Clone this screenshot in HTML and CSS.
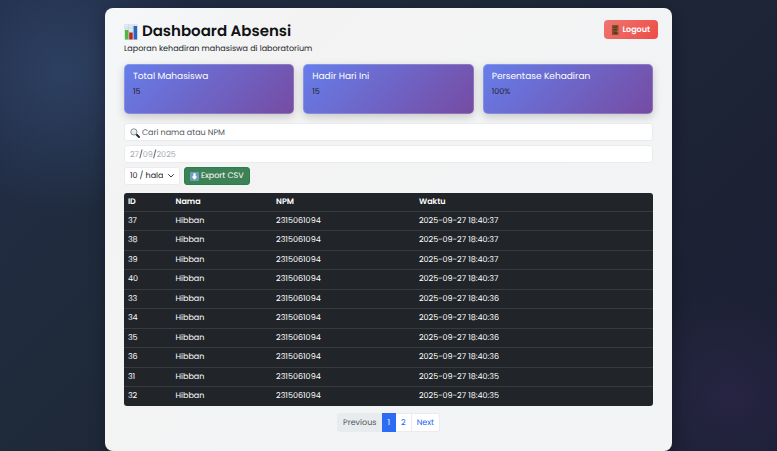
FILE: index.html
```html
<!DOCTYPE html>
<html lang="id">
<head>
<meta charset="utf-8">
<meta name="viewport" content="width=device-width, initial-scale=1">
<title>Dashboard Absensi</title>
<link rel="stylesheet" href="styles.css">
</head>
<body>
<main class="panel">
  <header class="header">
    <div class="heading">
      <h1 class="title">
        <svg class="title-icon" viewBox="0 0 14 16" aria-hidden="true">
          <rect width="14" height="16" fill="#dce9f1"/>
          <path d="M0 4h14M0 8h14M0 12h14M4.500 0v16M9 0v16" stroke="#bfd3df" stroke-width=".5"/>
          <rect x="1" y="6" width="3.500" height="9.500" fill="#4fb83d"/>
          <rect x="5.200" y="8.500" width="3.500" height="7" fill="#c5221f"/>
          <rect x="9.600" y="2" width="3.500" height="13.500" fill="#2b66bd"/>
        </svg>
        Dashboard Absensi
      </h1>
      <p class="subtitle">Laporan kehadiran mahasiswa di laboratorium</p>
    </div>
    <button class="logout" type="button">
      <svg class="door-icon" viewBox="0 0 7 10" aria-hidden="true">
        <rect width="6.500" height="10" fill="#80502f"/>
        <path d="M1.500 1.500h3.500v1.500H1.500zM1.500 4h3.500v1.500H1.500zM1.500 7h3.500v2H1.500z" fill="#633b23"/>
        <circle cx="5.700" cy="6" r=".6" fill="#d0a060"/>
      </svg>
      Logout
    </button>
  </header>

  <section class="stats">
    <article class="stat"><h2>Total Mahasiswa</h2><p>15</p></article>
    <article class="stat"><h2>Hadir Hari Ini</h2><p>15</p></article>
    <article class="stat"><h2>Persentase Kehadiran</h2><p>100%</p></article>
  </section>

  <form class="filters">
    <label class="field">
      <svg class="search-icon" viewBox="0 0 10 10" aria-hidden="true">
        <path d="M6 6l3 3" stroke="#25282b" stroke-width="1.900" stroke-linecap="round"/>
        <circle cx="3.900" cy="3.900" r="3.100" fill="#e3edf2" stroke="#81878b" stroke-width=".9"/>
        <path d="M2.200 3.500q.4-1.300 1.700-1.400" fill="none" stroke="#fff" stroke-width=".7"/>
      </svg>
      <input class="search" type="text" placeholder="Cari nama atau NPM" aria-label="Cari nama atau NPM">
    </label>
    <div class="field date">
      <input class="date-part" type="text" value="27" aria-label="Tanggal"><span>/</span><input class="date-part month" type="text" value="09" aria-label="Bulan"><span>/</span><input class="date-part year" type="text" value="2025" aria-label="Tahun">
    </div>
    <div class="actions">
      <div class="select-wrap">
        <select class="page-size" aria-label="Baris per halaman"><option>10 / halaman</option><option>25 / halaman</option></select>
        <svg class="chevron" viewBox="0 0 8 8" aria-hidden="true"><path d="M1.500 2.500L4 5l2.500-2.500" fill="none" stroke="#343a40" stroke-linecap="round" stroke-linejoin="round"/></svg>
      </div>
      <button class="export" type="button">
        <svg class="export-icon" viewBox="0 0 9 9" aria-hidden="true">
          <rect width="9" height="9" rx="1" fill="#6e9dbe"/>
          <path d="M3.400 1.200h2.200v3.300h1.800L4.500 7.800 1.600 4.500h1.800z" fill="#fff"/>
        </svg>
        Export CSV
      </button>
    </div>
  </form>

  <table class="records">
    <thead><tr><th class="col-id">ID</th><th class="col-name">Nama</th><th class="col-npm">NPM</th><th>Waktu</th></tr></thead>
    <tbody>
      <tr><td>37</td><td>Hibban</td><td>2315061094</td><td>2025-09-27 18:40:37</td></tr>
      <tr><td>38</td><td>Hibban</td><td>2315061094</td><td>2025-09-27 18:40:37</td></tr>
      <tr><td>39</td><td>Hibban</td><td>2315061094</td><td>2025-09-27 18:40:37</td></tr>
      <tr><td>40</td><td>Hibban</td><td>2315061094</td><td>2025-09-27 18:40:37</td></tr>
      <tr><td>33</td><td>Hibban</td><td>2315061094</td><td>2025-09-27 18:40:36</td></tr>
      <tr><td>34</td><td>Hibban</td><td>2315061094</td><td>2025-09-27 18:40:36</td></tr>
      <tr><td>35</td><td>Hibban</td><td>2315061094</td><td>2025-09-27 18:40:36</td></tr>
      <tr><td>36</td><td>Hibban</td><td>2315061094</td><td>2025-09-27 18:40:36</td></tr>
      <tr><td>31</td><td>Hibban</td><td>2315061094</td><td>2025-09-27 18:40:35</td></tr>
      <tr><td>32</td><td>Hibban</td><td>2315061094</td><td>2025-09-27 18:40:35</td></tr>
    </tbody>
  </table>

  <nav class="pagination" aria-label="Halaman">
    <a class="page disabled" aria-disabled="true">Previous</a>
    <a class="page active" href="#1" aria-current="page">1</a>
    <a class="page" href="#2">2</a>
    <a class="page" href="#next">Next</a>
  </nav>
</main>
</body>
</html>
```

FILE: styles.css
```css
* {
  box-sizing: border-box;
}

body {
  margin: 0;
  padding-top: 8px;
  min-height: 100vh;
  font-family: Poppins, Inter, sans-serif;
  font-size: 8px;
  line-height: 12px;
  text-rendering: geometricPrecision;
  color: #212529;
  background:
    radial-gradient(circle at 8% 16%, rgba(64, 96, 145, 0.38), transparent 140px),
    radial-gradient(circle at 94% 88%, rgba(70, 45, 105, 0.28), transparent 110px),
    linear-gradient(135deg, #222d49 0%, #1f2a3a 35%, #1d2435 65%, #1a1f33 100%);
}

h1, h2, p {
  margin: 0;
}

input, select, button {
  font: inherit;
  color: inherit;
  text-rendering: inherit;
}

.panel {
  width: 73%;
  margin: 0 auto;
  padding: 12px 19px 19px;
  border-radius: 8px;
  background: linear-gradient(135deg, #f5f7f9 0, #f3f3f3 20%, #f2f4f6 100%);
  box-shadow: 0 4px 16px rgba(0, 0, 0, 0.3);
}

.header {
  display: flex;
  align-items: flex-start;
  justify-content: space-between;
  margin-right: -5px;
}

.heading {
  padding-bottom: 9px;
}

.title {
  display: flex;
  align-items: center;
  gap: 4px;
  font-size: 15px;
  line-height: 23px;
  font-weight: 600;
  color: #101214;
}

.title-icon {
  width: 14px;
  height: 16px;
}

.logout {
  display: flex;
  align-items: center;
  gap: 3px;
  height: 19px;
  padding: 0 8px;
  border: 0;
  border-radius: 4px;
  color: #fff;
  font-weight: 600;
  background: linear-gradient(135deg, #ee7670, #ef4b46);
}

.door-icon {
  width: 7px;
  height: 10px;
}

.stats {
  display: grid;
  grid-template-columns: repeat(3, 1fr);
  gap: 9px;
}

.stat {
  height: 50px;
  padding: 5px 8px;
  border: 1px solid rgba(255, 255, 255, 0.2);
  border-radius: 5px;
  background: linear-gradient(135deg, #667eea, #764ba2) border-box;
  box-shadow: 0 3px 8px rgba(0, 0, 0, 0.18);
}

.stat h2 {
  font-size: 9px;
  line-height: 14px;
  font-weight: 400;
  color: #fff;
}

.stat p {
  padding-top: 2px;
}

.filters {
  display: flex;
  flex-direction: column;
  gap: 4px;
  margin-top: 9px;
}

.field {
  display: flex;
  align-items: center;
  height: 18px;
  padding: 1px 5px 0;
  border: 1px solid #e9ecef;
  border-radius: 3px;
  background: #fff;
}

.search-icon {
  width: 10px;
  height: 10px;
}

.search {
  flex: 1;
  padding: 0 2px;
  border: 0;
  outline: 0;
  background: none;
}

.search::placeholder {
  color: #54595e;
  opacity: 1;
}

.date-part {
  width: 9px;
  padding: 0;
  border: 0;
  background: none;
  color: #a5acb3;
}

.date-part.month {
  width: 10px;
}

.date-part.year {
  width: 24px;
}

.actions {
  display: flex;
  gap: 4px;
}

.select-wrap {
  position: relative;
  width: 56px;
}

.page-size {
  appearance: none;
  width: 100%;
  height: 18px;
  padding: 0 16px 0 5px;
  border: 1px solid #e9ecef;
  border-radius: 3px;
  background: #fff;
  overflow: hidden;
}

.chevron {
  position: absolute;
  top: 5px;
  right: 5px;
  width: 8px;
  height: 8px;
  pointer-events: none;
}

.export {
  display: flex;
  align-items: center;
  gap: 2px;
  height: 18px;
  padding: 0 5px;
  border: 1px solid #23834f;
  border-radius: 3px;
  color: #fff;
  background: #3f8157;
}

.export-icon {
  width: 9px;
  height: 9px;
}

.records {
  width: 100%;
  margin-top: 8px;
  table-layout: fixed;
  border-collapse: separate;
  border-spacing: 0;
  border-radius: 3px;
  overflow: hidden;
  color: #fff;
  background: #212529;
}

.records th,
.records td {
  padding: 3px 4px;
  border-bottom: 1px solid #373b3e;
  text-align: left;
}

.records tr:nth-child(even) > * {
  padding-bottom: 4px;
}

.records th {
  font-weight: 600;
}

.records tr:last-child td {
  border-bottom: 0;
}

.col-id {
  width: 9%;
}

.col-name {
  width: 19%;
}

.col-npm {
  width: 27%;
}

.pagination {
  display: flex;
  justify-content: center;
  margin-top: 7px;
}

.page {
  padding: 2px 5px;
  border: 1px solid #e9ecef;
  border-left-width: 0;
  line-height: 13px;
  color: #2468f2;
  background: #fff;
  text-decoration: none;
}

.page:first-child {
  border-left-width: 1px;
  border-radius: 3px 0 0 3px;
}

.page:last-child {
  border-radius: 0 3px 3px 0;
}

.page.active {
  border-color: #2c6cf5;
  color: #fff;
  background: #2c6cf5;
}

.page.disabled {
  color: #54595e;
  background: #e9ecef;
}
```
